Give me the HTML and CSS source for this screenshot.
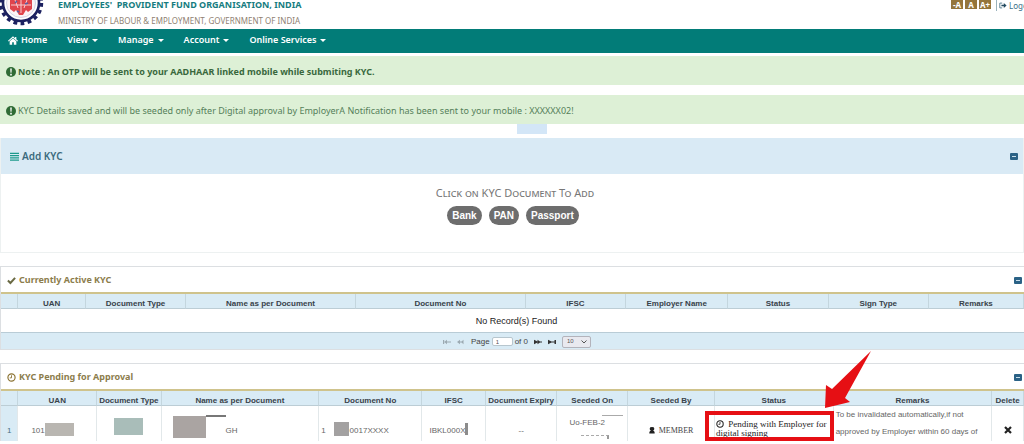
FILE: index.html
```html
<!DOCTYPE html>
<html lang="en">
<head>
<meta charset="utf-8">
<title>EPFO Member Home - KYC</title>
<link rel="stylesheet" href="styles.css">
</head>
<body>
<header class="masthead">
  <svg class="logo" viewBox="0 0 44 48" aria-hidden="true">
    <circle cx="21" cy="24" r="20.5" fill="none" stroke="#1c2160" stroke-width="3.400" stroke-dasharray="3.800 3.360"/>
    <circle cx="21" cy="24" r="18" fill="#fff" stroke="#1c2160" stroke-width="2.600"/>
    <circle cx="21" cy="24" r="14.500" fill="#fbf3f6" stroke="#d3d4e6" stroke-width="1"/>
    <path d="M10 20h22v10l-4 3-2-2-3 5h-4l-3-5-2 2-4-3z" fill="#e0454c"/>
    <path d="M15 21l3 8M21 21v13M27 21l-3 8M11 26h20" stroke="#f8cdd0" stroke-width="1" fill="none"/>
    <path d="M15 24l2-2M25 25l3-1M17 32l2 1" stroke="#5560a5" stroke-width="1.400"/>
  </svg>
  <div class="titles">
    <h1>EMPLOYEES'&nbsp; PROVIDENT FUND ORGANISATION, INDIA</h1>
    <p>MINISTRY OF LABOUR &amp; EMPLOYMENT, GOVERNMENT OF INDIA</p>
  </div>
  <div class="tools">
    <button type="button" class="size">-A</button>
    <button type="button" class="size">A</button>
    <button type="button" class="size">A+</button>
    <a class="logout" href="#"><svg viewBox="0 0 10 8" aria-hidden="true"><path d="M4 1H1v6h3" fill="none" stroke="#3c6a80" stroke-width="1"/><path d="M3 3h3V1l3.500 3L6 7V5H3z" fill="#234a60"/></svg>Logout</a>
  </div>
</header>

<nav class="menu">
  <a href="#" class="home"><svg viewBox="0 0 12 10" aria-hidden="true"><path d="M6 0L0 5.200l.8.9L6 1.700l5.200 4.400.8-.9-2-1.700V.8H8.500v1.400zM6 2.600L2 6v4h3V7h2v3h3V6z" fill="#fff"/></svg>Home</a>
  <a href="#" class="drop">View</a>
  <a href="#" class="drop">Manage</a>
  <a href="#" class="drop">Account</a>
  <a href="#" class="drop">Online Services</a>
</nav>

<main>
  <div class="alert strong"><svg viewBox="0 0 10 10" aria-hidden="true"><circle cx="5" cy="5" r="5" fill="#2f6b35"/><path d="M4.200 1.600h1.600L5.500 5.800h-1z M4.200 6.800h1.600v1.600H4.200z" fill="#fff"/></svg>Note : An OTP will be sent to your AADHAAR linked mobile while submiting KYC.</div>
  <div class="alert"><svg viewBox="0 0 10 10" aria-hidden="true"><circle cx="5" cy="5" r="5" fill="#2f6b35"/><path d="M4.200 1.600h1.600L5.500 5.800h-1z M4.200 6.800h1.600v1.600H4.200z" fill="#fff"/></svg><span>KYC Details saved and will be seeded only after Digital approval by EmployerA Notification has been sent to your mobile : XXXXXX02!</span></div>
  <div class="tab"></div>

  <section class="panel add">
    <header class="panel-head">
      <svg viewBox="0 0 10 9" aria-hidden="true"><path d="M0 1h10M0 3.500h10M0 6h10M0 8.500h10" stroke="#1d9a8c" stroke-width="1.500"/></svg>
      <h2>Add KYC</h2>
      <button type="button" class="toggle" aria-label="Collapse Add KYC"></button>
    </header>
    <div class="add-body">
      <p>Click on KYC Document To Add</p>
      <div class="pills">
        <button type="button">Bank</button>
        <button type="button">PAN</button>
        <button type="button">Passport</button>
      </div>
    </div>
  </section>

  <section class="panel active">
    <header class="panel-head">
      <svg viewBox="0 0 10 9" aria-hidden="true"><path d="M1 4.500l2.800 2.800L9 1.500" fill="none" stroke="#6a6a44" stroke-width="2.200"/></svg>
      <h2>Currently Active KYC</h2>
      <button type="button" class="toggle" aria-label="Collapse Currently Active KYC"></button>
    </header>
    <table>
      <colgroup><col class="w17"><col class="w68"><col class="w100"><col class="w170"><col class="w170"><col class="w100"><col class="w102"><col class="w100"><col class="w100"><col></colgroup>
      <thead><tr>
        <th></th><th><span>UAN</span></th><th><span>Document Type</span></th><th><span>Name as per Document</span></th><th><span>Document No</span></th><th><span>IFSC</span></th><th><span>Employer Name</span></th><th><span>Status</span></th><th><span>Sign Type</span></th><th><span>Remarks</span></th>
      </tr></thead>
      <tbody><tr><td colspan="10" class="empty">No Record(s) Found</td></tr></tbody>
    </table>
    <div class="pager">
      <button type="button" class="off" aria-label="First page"><svg viewBox="0 0 8 6"><path d="M0 1h1.200v4H0zM1.200 3L4 .8v1.600h4v1.200H4v1.600z"/></svg></button>
      <button type="button" class="off" aria-label="Previous page"><svg viewBox="0 0 8 6"><path d="M0 3L3 .8v1.600h1.500L6.500.8v4.400L4.500 3.600H3v1.600z"/></svg></button>
      <label>Page <input type="text" value="1"></label>
      <span class="of">of 0</span>
      <button type="button" aria-label="Next page"><svg viewBox="0 0 8 6"><path d="M0 .8L3.500 2.400V.8L6 2.400h2v1.200H6L3.500 5.200V3.600L0 5.200z"/></svg></button>
      <button type="button" aria-label="Last page"><svg viewBox="0 0 8 6"><path d="M0 .8L3.500 2.400H6.500V1H8v4H6.500V3.600h-3L0 5.200z"/></svg></button>
      <span class="rows"><select aria-label="Rows per page"><option>10</option></select><svg viewBox="0 0 6 4" aria-hidden="true"><path d="M.5.500L3 3 5.500.5" fill="none" stroke="#555" stroke-width="1"/></svg></span>
    </div>
  </section>

  <section class="panel pending">
    <header class="panel-head">
      <svg viewBox="0 0 10 10" aria-hidden="true"><circle cx="5" cy="5" r="4" fill="none" stroke="#8c7434" stroke-width="1.300"/><path d="M5 2.500V5.400H3" fill="none" stroke="#8c7434" stroke-width="1"/></svg>
      <h2>KYC Pending for Approval</h2>
      <button type="button" class="toggle" aria-label="Collapse KYC Pending for Approval"></button>
    </header>
    <div class="viewport">
      <table>
        <colgroup><col class="w17"><col class="w79"><col class="w64"><col class="w158"><col class="w103"><col class="w63"><col class="w72"><col class="w71"><col class="w87"><col class="w119"><col class="w159"><col></colgroup>
        <thead><tr>
          <th></th><th><span>UAN</span></th><th><span>Document Type</span></th><th><span>Name as per Document</span></th><th><span>Document No</span></th><th><span>IFSC</span></th><th><span>Document Expiry</span></th><th><span>Seeded On</span></th><th><span>Seeded By</span></th><th><span>Status</span></th><th><span>Remarks</span></th><th><span>Delete</span></th>
        </tr></thead>
        <tbody><tr>
          <td class="num">1</td>
          <td><div class="cell uan">101<i class="mask warm"></i></div></td>
          <td><div class="cell type"><i class="mask teal"></i></div></td>
          <td><div class="cell name"><i class="mask big"></i><i class="stroke"></i><span>GH</span></div></td>
          <td><div class="cell docno"><span>1</span><i class="mask small"></i><span>0017XXXX</span></div></td>
          <td><div class="cell ifsc">IBKL000X<i class="mask sliver"></i></div></td>
          <td><div class="cell center">--</div></td>
          <td><div class="cell seeded"><i class="hair"></i><span>Uo-FEB-2</span><i class="dots"></i></div></td>
          <td><div class="cell member"><svg viewBox="0 0 8 9" aria-hidden="true"><path d="M4 0a2.300 2.300 0 0 1 1.400 4.400C7 5 7.600 6 7.600 8.500H.4C.4 6 1 5 2.600 4.400A2.300 2.300 0 0 1 4 0z" fill="#222"/></svg>MEMBER</div></td>
          <td><div class="status"><svg viewBox="0 0 10 10" aria-hidden="true"><circle cx="5" cy="5" r="4" fill="none" stroke="#222" stroke-width="1.300"/><path d="M5 2.500V5.400H3" fill="none" stroke="#222" stroke-width="1"/></svg> Pending with Employer for digital signing</div></td>
          <td><div class="remarks">To be invalidated automatically,if not<br>approved by Employer within 60 days of</div></td>
          <td><button type="button" class="delete" aria-label="Delete"><svg viewBox="0 0 8 8"><path d="M1 1l6 6M7 1L1 7" stroke="#222" stroke-width="2.200"/></svg></button></td>
        </tr></tbody>
      </table>
    </div>
    <div class="highlight"></div>
    <svg class="arrow" viewBox="0 0 46 58" aria-hidden="true"><path d="M46 0L20 47l5 4L0 57 1 34l6 4z" fill="#e60f14"/></svg>
  </section>
</main>
</body>
</html>
```

FILE: styles.css
```css
* { box-sizing: border-box; }

body {
  margin: 0;
  background: #fff;
  color: #333;
  font-family: "Noto Sans", "Open Sans", sans-serif;
  font-size: 9px;
  overflow: hidden;
}

h1, h2, p { margin: 0; }
button { font: inherit; padding: 0; border: 0; background: none; }
svg { flex: none; }

.masthead {
  display: flex;
  align-items: flex-end;
  height: 29px;
  overflow: hidden;
}
.logo { width: 44px; height: 48px; margin-bottom: 2px; }
.titles { margin: 0 auto 2px 14px; white-space: nowrap; }
.titles h1 {
  font-size: 9px;
  line-height: 20px;
  color: #167c80;
}
.titles p {
  font-size: 8px;
  line-height: 12px;
  color: #8f7f72;
}
.tools {
  display: flex;
  gap: 2px;
  align-self: flex-start;
  flex: none;
  width: 73px;
}
.size {
  flex: none;
  width: 12px;
  height: 9px;
  background: #94753b;
  color: #fff;
  font-size: 8px;
  font-weight: 700;
  line-height: 9px;
}
.logout {
  display: flex;
  flex: none;
  align-items: center;
  gap: 2px;
  height: 11px;
  margin-left: 3px;
  padding-left: 2px;
  border-left: 1px solid #9ab3bd;
  color: #39708a;
  font-size: 8px;
  line-height: 10px;
  text-decoration: none;
}
.logout svg { width: 8px; height: 7px; }

.menu {
  display: flex;
  align-items: center;
  gap: 20px;
  height: 24px;
  padding: 0 8px 2px;
  background: #027c78;
}
.menu a {
  display: flex;
  align-items: center;
  color: #fff;
  font-weight: 600;
  text-decoration: none;
  line-height: 14px;
}
.home svg { width: 10px; height: 9px; margin-right: 3px; }
.drop::after {
  content: "";
  margin-left: 4px;
  border: 3px solid transparent;
  border-top-color: #fff;
  border-bottom: 0;
}

.alert {
  display: flex;
  align-items: center;
  gap: 2px;
  height: 29px;
  margin: 3px 0 10px;
  padding: 2px 6px 0;
  background: #ddf0d6;
  color: #55805a;
  white-space: nowrap;
}
.alert + .alert { margin: 10px 0 0; }
.alert.strong { font-weight: 700; color: #39683d; }
.alert svg { width: 10px; height: 10px; }
.tab {
  width: 30px;
  height: 10px;
  margin: 0 auto 4px;
  position: relative;
  left: 2%;
  background: #d3e6f7;
}

.panel { position: relative; border: 1px solid #dcdfe2; }
.panel-head {
  display: flex;
  align-items: center;
  gap: 3px;
  height: 27px;
  padding: 1px 2px 0 6px;
}
.panel-head h2 { flex: 1; font-size: 9px; font-weight: 700; line-height: 14px; }
.panel-head svg { width: 9px; height: 9px; }
.toggle {
  width: 8px;
  height: 7px;
  border: 2px solid #2b6286;
  border-radius: 1px;
  background: #c9dfec;
  border-width: 3px 2px;
}

.add { border: 1px solid #edf1f1; border-top: 0; }
.add .panel-head { height: 36px; padding: 0 5px 0 9px; background: #d9eaf5; }
.add .panel-head h2 { font-size: 10px; font-weight: 600; color: #3b6a7d; }
.add-body {
  padding: 12px 0 27px 6px;
  text-align: center;
}
.add-body p {
  font-size: 11px;
  line-height: 14px;
  font-variant: small-caps;
  color: #777;
}
.pills {
  display: flex;
  justify-content: center;
  gap: 7px;
  margin: 6px 4px 0 0;
}
.pills button {
  height: 19px;
  padding: 0 5px;
  border-radius: 10px;
  background: #6d6d6d;
  color: #fff;
  font: 700 10px/19px "Liberation Sans", Arial, sans-serif;
}

.active { margin-top: 13px; border-right: 0; }
.active .panel-head h2, .pending .panel-head h2 { color: #8c7d4c; }
.active .panel-head, .pending .panel-head { border-bottom: 2px solid #cfc38c; }

table {
  width: 100%;
  table-layout: fixed;
  border-collapse: separate;
  border-spacing: 0;
  font-family: "Liberation Sans", Arial, sans-serif;
  font-size: 8px;
}
th, td { padding: 0; overflow: hidden; }
th {
  height: 15px;
  background: #d9ebf5;
  border-right: 1px solid #c4d6de;
  border-bottom: 1px solid #bccdd5;
  vertical-align: bottom;
  color: #38424a;
}
th span {
  display: block;
  height: 9px;
  overflow: hidden;
  line-height: 10px;
  white-space: nowrap;
}
.empty { height: 23px; padding-left: 8px; text-align: center; font-size: 9px; color: #222; }

.w17 { width: 1.700%; }
.w63 { width: 6.200%; }
.w64 { width: 6.300%; }
.w68 { width: 6.600%; }
.w71 { width: 6.900%; }
.w72 { width: 7%; }
.w79 { width: 7.700%; }
.w87 { width: 8.500%; }
.w100 { width: 9.800%; }
.w102 { width: 10%; }
.w103 { width: 10.100%; }
.w119 { width: 11.600%; }
.w158 { width: 15.400%; }
.w159 { width: 15.500%; }
.w170 { width: 16.600%; }

.pager {
  display: flex;
  align-items: center;
  justify-content: center;
  gap: 6px;
  height: 17px;
  padding: 1px 0 0 9px;
  border-top: 1px solid #b9ccd6;
  background: #d9ebf5;
  font: 8px/10px "Liberation Sans", Arial, sans-serif;
  color: #444;
}
.pager button { display: flex; }
.pager button svg { width: 8px; height: 6px; fill: #333; }
.pager .off svg { fill: #9caab2; }
.pager label { display: flex; align-items: center; gap: 2px; }
.pager input {
  width: 21px;
  height: 9px;
  padding: 0 3px;
  border: 1px solid #b7c6ce;
  border-radius: 2px;
  background: #fff;
  font: 6px/7px "Liberation Sans", Arial, sans-serif;
  color: #555;
}
.of { margin-left: -4px; }
.rows { position: relative; display: flex; }
.rows select {
  appearance: none;
  width: 29px;
  height: 12px;
  padding: 0 4px;
  border: 1px solid #b3b3bb;
  border-radius: 2px;
  background: #e9e9ef;
  font: 6px/9px "Liberation Sans", Arial, sans-serif;
  color: #555;
}
.rows svg { position: absolute; right: 4px; top: 4px; width: 6px; height: 4px; }

.pending { margin-top: 13px; border-right: 0; border-bottom: 0; }
.viewport { height: 50px; overflow: hidden; }
.pending td {
  height: 35px;
  border-right: 1px solid #e2e8ea;
  vertical-align: top;
  color: #666;
}
.pending .num {
  padding-top: 20px;
  background: #d9ebf5;
  text-align: center;
  color: #4c7080;
}
.cell {
  display: flex;
  align-items: center;
  height: 35px;
  padding-top: 14px;
  white-space: nowrap;
}
.center { justify-content: center; }
.mask { flex: none; }
.uan { padding-left: 13px; }
.warm { width: 29px; height: 13px; margin-bottom: 3px; background: #b9b6b1; }
.type { justify-content: center; }
.teal { width: 29px; height: 17px; margin-bottom: 8px; background: #a9bdb9; }
.name { padding-left: 11px; }
.big { width: 33px; height: 22px; margin-bottom: 8px; background: #aaa4a2; }
.stroke { width: 20px; height: 2px; margin-bottom: 29px; background: #777; }
.docno { padding-left: 2px; }
.small { width: 15px; height: 14px; margin: 0 1px 3px 8px; background: #a3a1a1; }
.ifsc { padding-left: 7px; }
.sliver { width: 3px; height: 12px; margin-bottom: 3px; background: #8c8c8c; }
.seeded {
  flex-direction: column;
  align-items: flex-start;
  padding: 9px 4px 0 12px;
}
.hair { align-self: flex-end; width: 21px; height: 1px; background: #aaa; }
.seeded span { line-height: 14px; }
.dots { width: 28px; height: 4px; margin: 5px 0 0 12px; border-top: 1px dashed #aaa; border-right: 2px solid #999; }
.member {
  justify-content: center;
  gap: 4px;
  font-family: "Liberation Serif", "Times New Roman", serif;
  font-size: 8px;
  color: #444;
}
.member svg { width: 6px; height: 7px; }
.status {
  padding: 14px 0 0 1px;
  font: 9px/9px "Liberation Serif", "Times New Roman", serif;
  color: #222;
}
.status svg { width: 8px; height: 8px; margin-right: 2px; vertical-align: -1px; }
.remarks { padding: 0 0 0 2px; line-height: 17px; white-space: nowrap; }
.delete { display: block; margin: 20px auto 0; }
.delete svg { display: block; width: 8px; height: 8px; }

.highlight {
  position: absolute;
  left: 68.800%;
  right: 18.600%;
  bottom: 0;
  height: 30px;
  border: 4px solid #e60f14;
}
.arrow {
  position: absolute;
  right: 15%;
  bottom: 32px;
  width: 46px;
  height: 58px;
}
```
